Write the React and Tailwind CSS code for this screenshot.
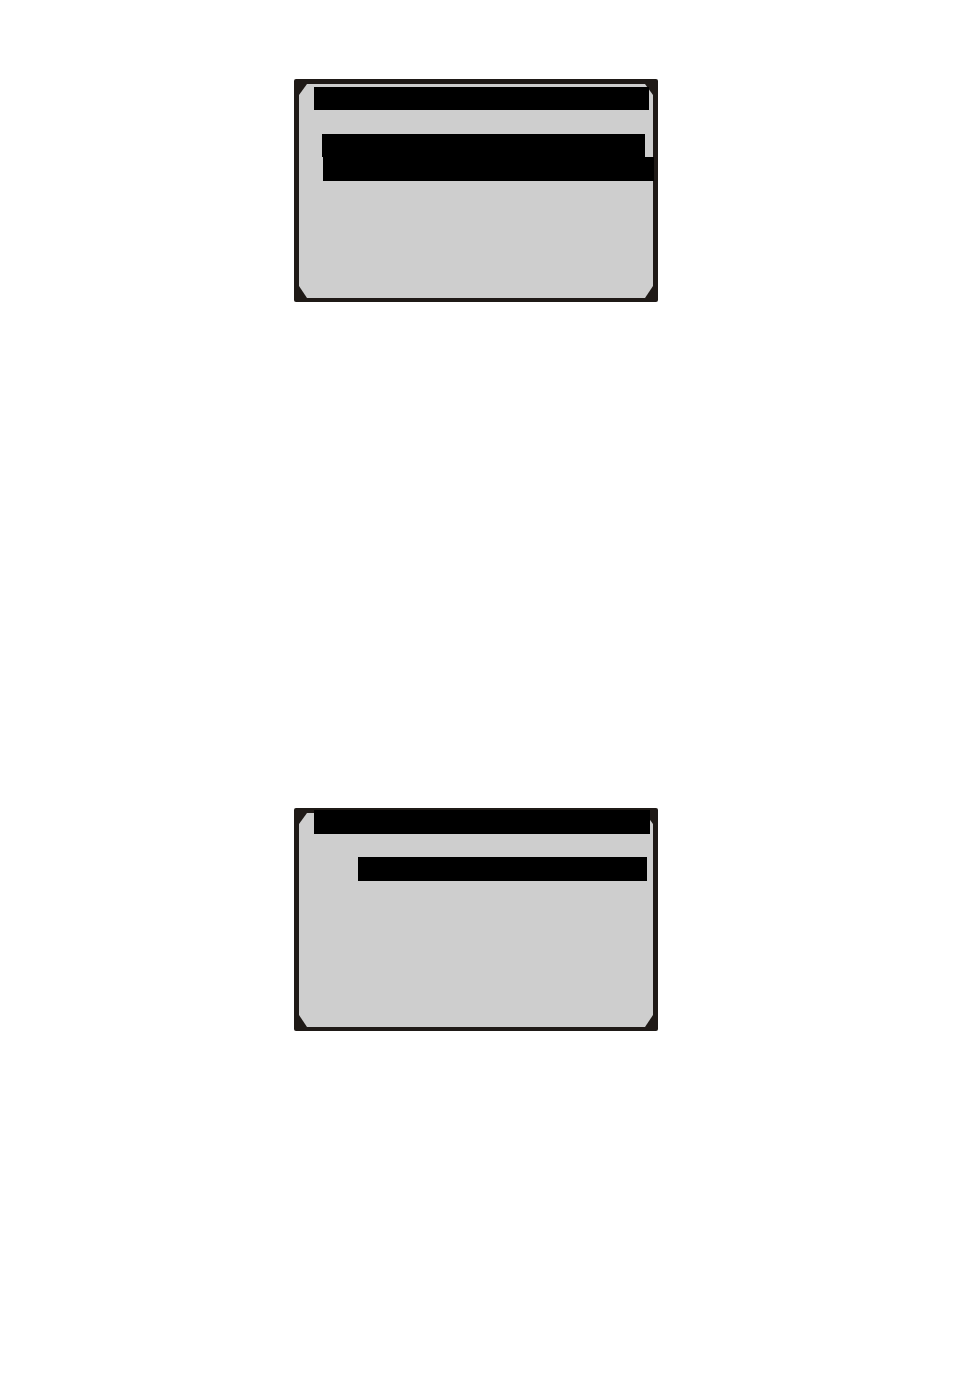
import React from "react";

const SCREENS = [
  {
    id: "first",
    padding: "pt-2",
    bars: [
      { id: "title", className: "mr-[9px] ml-5 h-[23px]" },
      { id: "line-1", className: "mt-6 mr-[13px] ml-7 h-[23px]" },
      { id: "line-2", className: "mr-1 ml-[29px] h-6" }
    ]
  },
  {
    id: "second",
    padding: "pt-0.5",
    bars: [
      { id: "title", className: "mr-2 ml-5 h-6" },
      { id: "line-1", className: "mt-[23px] mr-[11px] ml-16 h-6" }
    ]
  }
];

function Screen({ padding, bars }) {
  return (
    <section className="grid min-h-[223px] w-full max-w-[364px] rounded-[2px] bg-[#1f1a17]">
      {/* Display face with cut corners, stacked under the bars */}
      <div className="col-start-1 row-start-1 mx-[5px] mt-[5px] mb-1 bg-[#cecece] [clip-path:polygon(8px_0,calc(100%_-_8px)_0,100%_11px,100%_calc(100%_-_12px),calc(100%_-_8px)_100%,8px_100%,0_calc(100%_-_12px),0_11px)]" />
      <div className={`z-10 col-start-1 row-start-1 flex flex-col ${padding}`}>
        {bars.map((bar) => (
          <div key={bar.id} className={`bg-black ${bar.className}`} />
        ))}
      </div>
    </section>
  );
}

export default function App() {
  return (
    <main className="flex min-h-screen flex-col items-center gap-[506px] bg-white pt-[79px] pr-0.5 pb-12">
      {SCREENS.map((screen) => (
        <Screen key={screen.id} padding={screen.padding} bars={screen.bars} />
      ))}
    </main>
  );
}
